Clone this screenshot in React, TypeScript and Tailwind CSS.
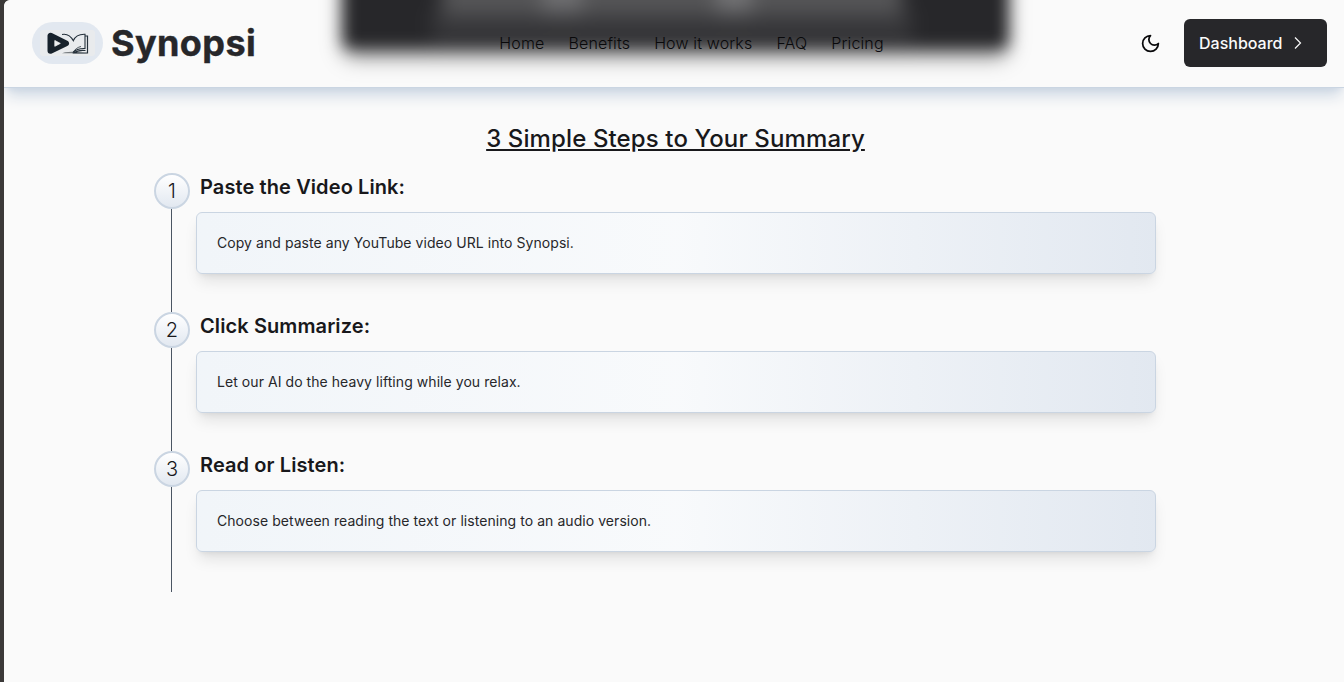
const links = ['Home', 'Benefits', 'How it works', 'FAQ', 'Pricing'];

const steps = [
  { title: 'Paste the Video Link:', text: 'Copy and paste any YouTube video URL into Synopsi.' },
  { title: 'Click Summarize:', text: 'Let our AI do the heavy lifting while you relax.' },
  { title: 'Read or Listen:', text: 'Choose between reading the text or listening to an audio version.' },
];

function Logo() {
  return (
    <div className="flex h-[42px] w-[71px] items-center justify-center rounded-3xl bg-slate-200">
      <svg width="55" height="26" viewBox="0 0 55 26" fill="none">
        <rect width="55" height="26" rx="3" fill="#e9ebed" />
        <path d="M25 22.3q7-1.4 15 .2l7.5.8H22z" fill="#777c80" />
        <path d="M22 4.5c5-1 9 2 11.3 6.2C35 6.5 39.500 4 45 4.200V18.500c-5-.2-9 .8-12 4" stroke="#25303a" strokeWidth="1.100" />
        <path d="M45 6h2.500v17H34c3-2.500 7-3 11.500-2.500" stroke="#25303a" strokeWidth="1.200" />
        <path d="M33 22.500c1.500-3 5-5.500 8-6" stroke="#25303a" strokeWidth=".8" />
        <path d="M10.500 5.800v15L26 13.400z" fill="#18222b" stroke="#18222b" strokeWidth="6" strokeLinejoin="round" />
        <path d="M14.800 10.500v5.800l5.500-2.900z" fill="#eef0f1" stroke="#eef0f1" strokeWidth=".8" strokeLinejoin="round" />
      </svg>
    </div>
  );
}

function Header() {
  return (
    <header className="relative z-10 h-[88px] shrink-0 rounded-tl-md border-b border-slate-300 bg-[#fafafa] shadow-lg shadow-slate-300">
      <div className="pointer-events-none absolute inset-0 overflow-hidden rounded-tl-md" aria-hidden="true">
        <div className="absolute -top-20 left-[338px] h-[129px] w-[667px] rounded-lg bg-[#27272a] shadow-[0_10px_15px_-3px_rgba(0,0,0,0.5)] blur-[8px]">
          <div className="absolute bottom-[33px] left-[100px] flex h-10 w-[460px] justify-between bg-[#565658] blur-[6px]">
            <div className="ml-[100px] w-10 bg-[#707072]" />
            <div className="mr-[150px] w-9 bg-[#747476]" />
          </div>
          <div className="absolute bottom-[6px] left-[90px] h-9 w-[480px] bg-[#515153]/40 blur-[7px]" />
        </div>
      </div>
      <div className="relative grid h-[85px] grid-cols-[1fr_auto_1fr] items-center pr-[17px] pl-7">
        <div className="flex items-center gap-2">
          <Logo />
          <span className="text-4xl font-bold tracking-[0.4px] text-[#27272a] [-webkit-text-stroke:0.4px_#27272a]">Synopsi</span>
        </div>
        <nav className="flex gap-6 pl-6 text-base font-light tracking-[0.15px] text-zinc-950">
          {links.map((l) => <a key={l} href="#">{l}</a>)}
        </nav>
        <div className="flex items-center justify-end gap-[23px]">
          <svg className="mt-px" width="21" height="21" viewBox="0 0 24 24" fill="none" stroke="#09090b" strokeWidth="2" strokeLinecap="round" strokeLinejoin="round">
            <path d="M12 3a6 6 0 0 0 9 9 9 9 0 1 1-9-9Z" />
          </svg>
          <button className="flex h-12 w-[143px] items-center gap-2.5 rounded-md bg-[#27272a] pl-[15px] text-base font-medium text-[#fafafa]">
            Dashboard
            <svg width="12" height="14" viewBox="0 0 12 14" fill="none" stroke="#fafafa" strokeWidth="1.200">
              <path d="M3 1.500 8.500 7 3 12.500" />
            </svg>
          </button>
        </div>
      </div>
    </header>
  );
}

export default function App() {
  return (
    <div className="h-[682px] overflow-hidden bg-[#3b3938] pl-1 font-[Inter,sans-serif]">
      <div className="flex h-full flex-col overflow-hidden rounded-tl-md bg-[#fafafa] text-[#18181b]">
        <Header />
        <main className="pt-[35px]">
          <h2 className="mb-[18px] pl-[3px] text-center text-2xl font-medium tracking-[0.12px] underline">3 Simple Steps to Your Summary</h2>
          <ol className="ml-[150px] w-[1002px]">
            {steps.map((s, i) => (
              <li key={s.title} className="flex h-[139px] gap-1.5 last:h-[141px]">
                <div className="flex w-9 shrink-0 flex-col items-center">
                  <div className="flex h-9 w-9 shrink-0 items-center justify-center rounded-full border-2 border-slate-300 bg-linear-to-b from-white to-slate-200 text-xl font-light">
                    {i + 1}
                  </div>
                  <div className="mr-px w-px flex-1 bg-[#4b5563]" />
                </div>
                <div className="flex-1">
                  <h3 className="mb-[11px] pl-1 text-xl font-semibold tracking-[0.1px]">{s.title}</h3>
                  <p className="rounded-md border border-slate-300 bg-linear-to-r from-slate-100 via-slate-50 to-slate-200 p-5 text-sm tracking-[0.06px] text-[#27272a] shadow-lg">
                    {s.text}
                  </p>
                </div>
              </li>
            ))}
          </ol>
        </main>
      </div>
    </div>
  );
}
